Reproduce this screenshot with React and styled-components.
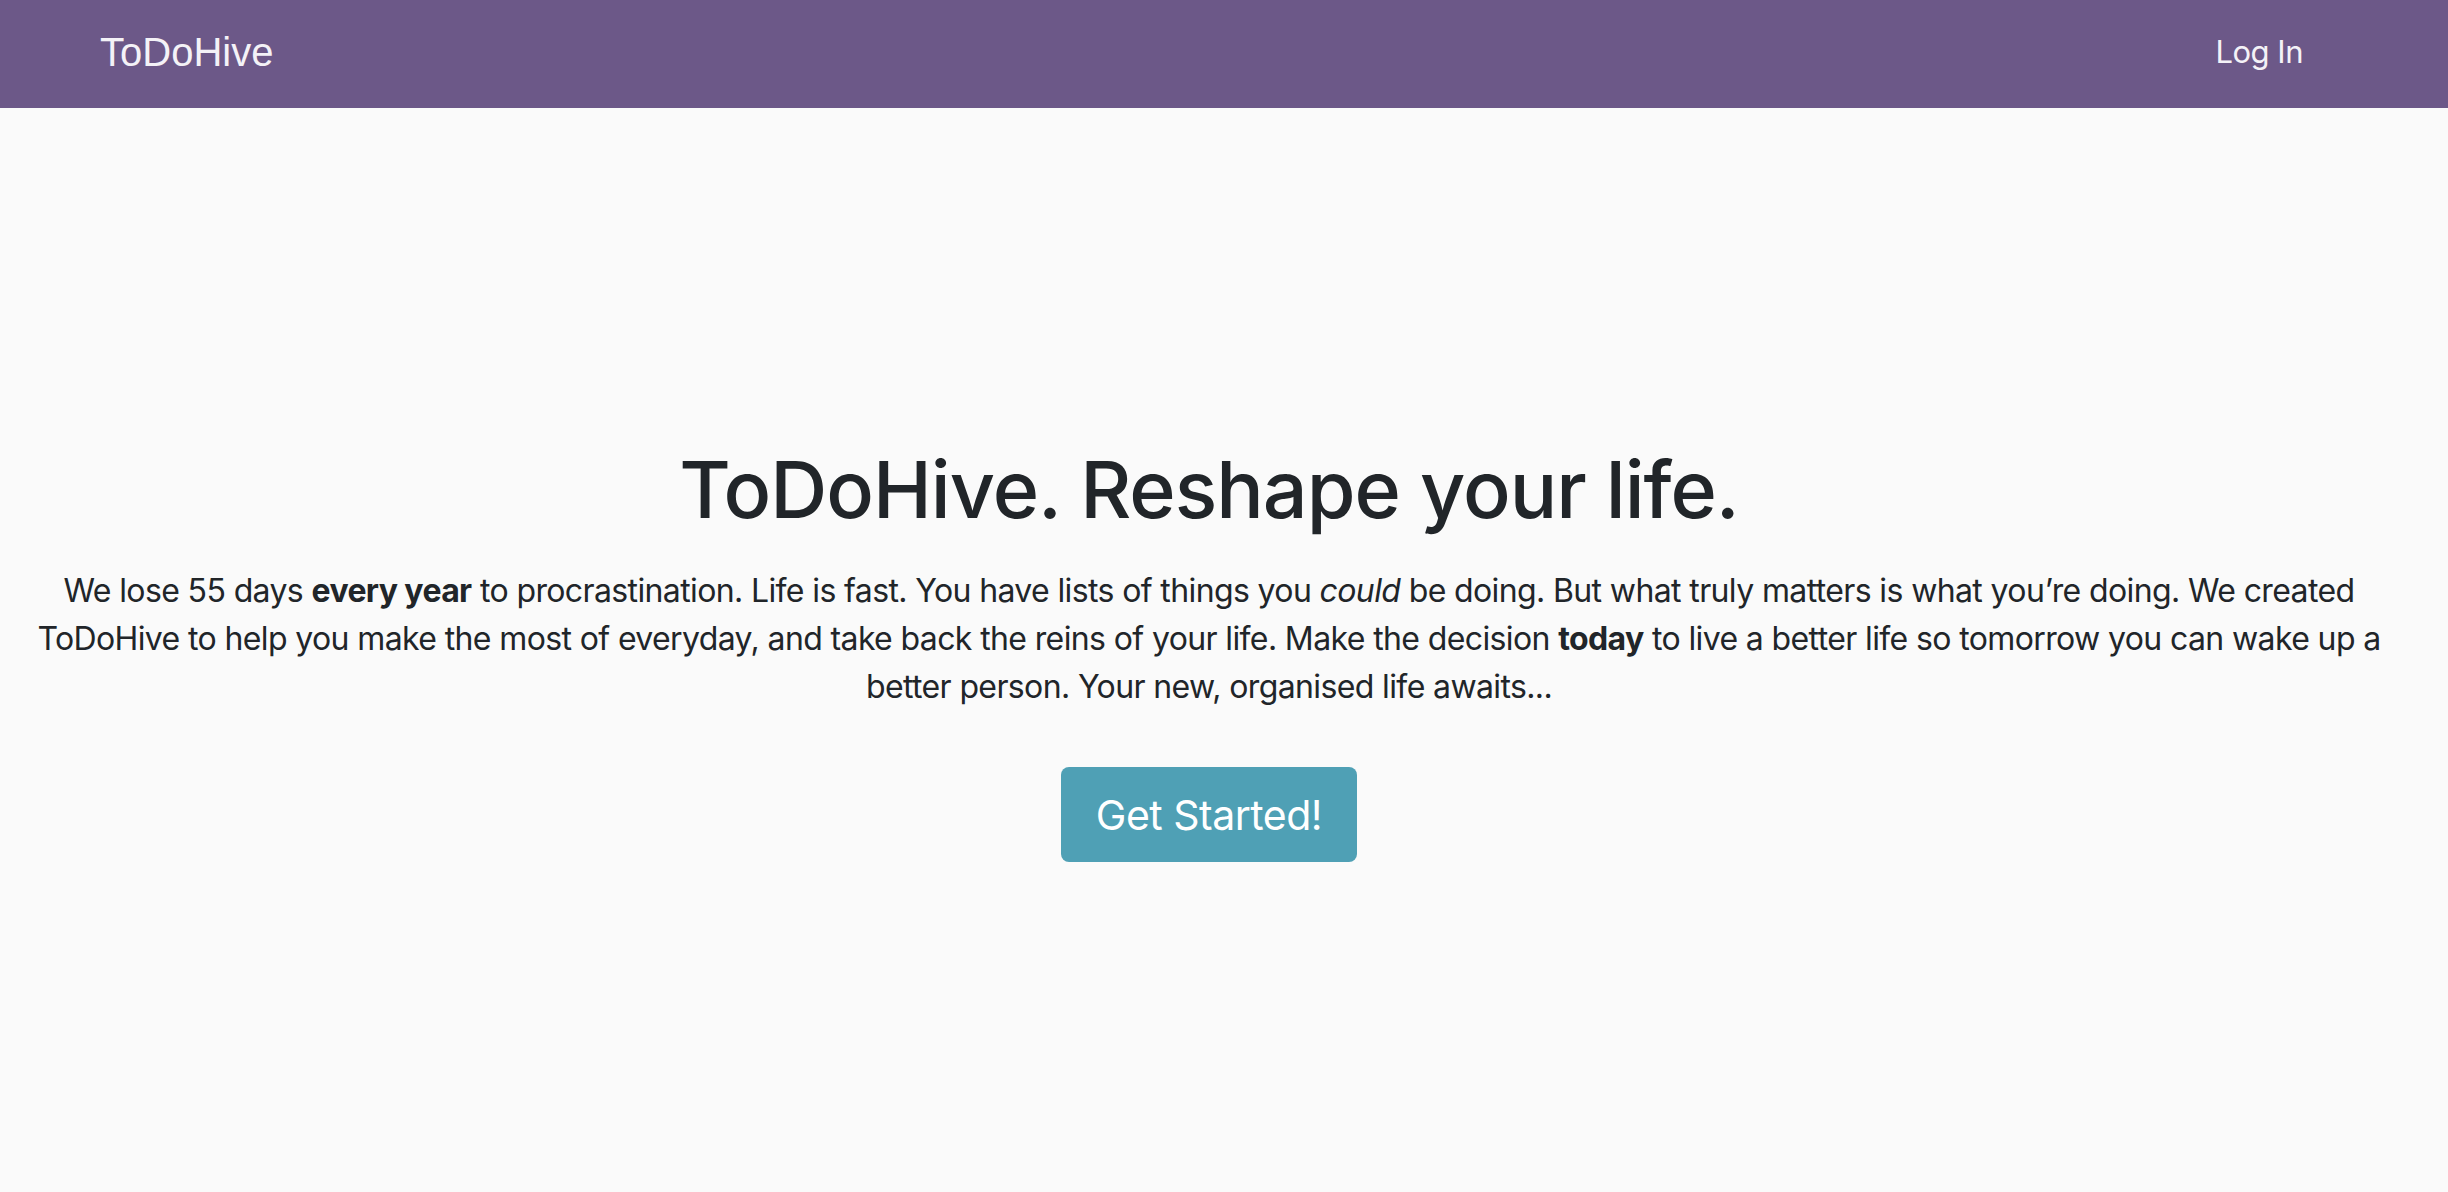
import React from 'react';
import styled, { createGlobalStyle } from 'styled-components';

const GlobalStyle = createGlobalStyle`
  html, body {
    margin: 0;
    padding: 0;
    background-color: #fafafa;
    color: #212529;
    font-family: Inter, 'Noto Sans', sans-serif;
  }
`;

const StyledNavbar = styled.nav`
  height: 108px;
  background-color: #6c5888;
  display: flex;
  align-items: center;
  justify-content: space-between;
  padding: 0 145px 0 100px;
  box-sizing: border-box;
`;

const StyledBrand = styled.a`
  font-family: 'Liberation Sans', Arial, sans-serif;
  font-size: 40px;
  color: #f4f2f7;
  text-decoration: none;
  margin-top: -4px;
`;

const StyledNavLink = styled.a`
  font-size: 31px;
  color: #f4f2f7;
  text-decoration: none;
  letter-spacing: -0.5px;
  margin-top: -6px;
`;

const StyledHero = styled.main`
  min-height: calc(100vh - 108px);
  display: flex;
  flex-direction: column;
  align-items: center;
  justify-content: center;
  text-align: center;
  padding: 4px 55px 0 25px;
  box-sizing: border-box;
`;

const StyledHeading = styled.h1`
  font-size: 79px;
  font-weight: 500;
  line-height: 1.2;
  letter-spacing: -1px;
  margin: 0 0 31px 0;
`;

const StyledLead = styled.p`
  font-size: 32px;
  line-height: 1.5;
  letter-spacing: -0.62px;
  margin: 0 0 56px 0;

  strong {
    font-weight: 700;
  }
`;

const StyledButton = styled.button`
  font-family: inherit;
  font-size: 41px;
  letter-spacing: -0.5px;
  color: #fff;
  background-color: #4fa0b5;
  border: none;
  border-radius: 8px;
  width: 296px;
  height: 95px;
  cursor: pointer;
`;

const App = () => (
  <>
    <GlobalStyle />
    <StyledNavbar>
      <StyledBrand href="#">ToDoHive</StyledBrand>
      <StyledNavLink href="#">Log In</StyledNavLink>
    </StyledNavbar>
    <StyledHero>
      <StyledHeading>ToDoHive. Reshape your life.</StyledHeading>
      <StyledLead>
        We lose 55 days <strong>every year</strong> to procrastination. Life is fast. You have lists
        of things you <em>could</em> be doing. But what truly matters is what you’re doing. We
        created
        <br />
        ToDoHive to help you make the most of everyday, and take back the reins of your life. Make
        the decision <strong>today</strong> to live a better life so tomorrow you can wake up a
        <br />
        better person. Your new, organised life awaits...
      </StyledLead>
      <StyledButton>Get Started!</StyledButton>
    </StyledHero>
  </>
);

export default App;
